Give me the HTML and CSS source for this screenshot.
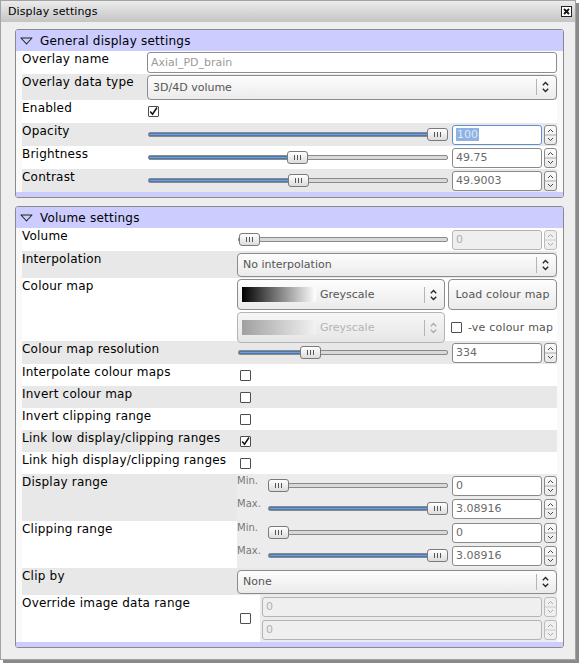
FILE: index.html
```html
<!DOCTYPE html>
<html>
<head>
<meta charset="utf-8">
<title>Display settings</title>
<link rel="stylesheet" href="styles.css">
</head>
<body>
<div class="window">
  <div class="titlebar">
    <span class="title">Display settings</span>
    <span class="close"><svg width="11" height="11" viewBox="0 0 11 11"><rect x="0.5" y="0.5" width="10" height="10" fill="#fff" stroke="#222"/><path d="M3 3 L8 8 M8 3 L3 8" stroke="#111" stroke-width="1.8"/></svg></span>
  </div>
  <div class="content">
    <section class="panel general">
      <div class="phead"><svg class="tri" width="13" height="8" viewBox="0 0 13 8"><path d="M1 1 L12 1 L6.5 7 Z" fill="none" stroke="#222" stroke-width="1.1" stroke-linejoin="round"/></svg><span>General display settings</span></div>
      <div class="rows">
        <div class="row h23"><div class="lbl">Overlay name</div><div class="ctl pt1"><div class="input">Axial_PD_brain</div></div></div>
        <div class="row h26 alt"><div class="lbl">Overlay data type</div><div class="ctl mid"><div class="combo"><span class="ctext">3D/4D volume</span><span class="csep"></span><svg class="carrow" width="7" height="12" viewBox="0 0 7 12"><path d="M0.8 4.2 L3.5 1.5 L6.2 4.2 M0.8 7.8 L3.5 10.5 L6.2 7.8" fill="none" stroke="#222" stroke-width="1.3"/></svg></div></div></div>
        <div class="row h23"><div class="lbl">Enabled</div><div class="ctl mid"><span class="check on"><svg width="11" height="11" viewBox="0 0 11 11"><path d="M2.2 5.5 L4.5 8.2 L9 1.5" fill="none" stroke="#111" stroke-width="1.5"/></svg></span></div></div>
        <div class="row h23 alt"><div class="lbl">Opacity</div><div class="ctl mid">
          <div class="ss">
            <div class="slider"><div class="groove"><div class="fill" style="width:290px"></div></div><div class="handle" style="left:280px"><i></i><i></i><i></i></div></div>
            <div class="spin focus"><span class="sel">100</span></div>
            <div class="arrows"><svg width="13" height="20" viewBox="0 0 13 20"><path d="M4 7 L6.5 4.5 L9 7 M4 13 L6.5 15.5 L9 13" fill="none" stroke="#444" stroke-width="1"/><path d="M1 10 H12" stroke="#aaa"/></svg></div>
          </div></div></div>
        <div class="row h23"><div class="lbl">Brightness</div><div class="ctl mid">
          <div class="ss">
            <div class="slider"><div class="groove"><div class="fill" style="width:148px"></div></div><div class="handle" style="left:140px"><i></i><i></i><i></i></div></div>
            <div class="spin">49.75</div>
            <div class="arrows"><svg width="13" height="20" viewBox="0 0 13 20"><path d="M4 7 L6.5 4.5 L9 7 M4 13 L6.5 15.5 L9 13" fill="none" stroke="#444" stroke-width="1"/><path d="M1 10 H12" stroke="#aaa"/></svg></div>
          </div></div></div>
        <div class="row h23 alt"><div class="lbl">Contrast</div><div class="ctl mid">
          <div class="ss">
            <div class="slider"><div class="groove"><div class="fill" style="width:149px"></div></div><div class="handle" style="left:141px"><i></i><i></i><i></i></div></div>
            <div class="spin">49.9003</div>
            <div class="arrows"><svg width="13" height="20" viewBox="0 0 13 20"><path d="M4 7 L6.5 4.5 L9 7 M4 13 L6.5 15.5 L9 13" fill="none" stroke="#444" stroke-width="1"/><path d="M1 10 H12" stroke="#aaa"/></svg></div>
          </div></div></div>
      </div>
      <div class="pfoot"></div>
    </section>

    <section class="panel volume">
      <div class="phead"><svg class="tri" width="13" height="8" viewBox="0 0 13 8"><path d="M1 1 L12 1 L6.5 7 Z" fill="none" stroke="#222" stroke-width="1.1" stroke-linejoin="round"/></svg><span>Volume settings</span></div>
      <div class="rows">
        <div class="row h23"><div class="lbl">Volume</div><div class="ctl mid">
          <div class="ss">
            <div class="slider"><div class="groove"><div class="fill" style="width:0px"></div></div><div class="handle" style="left:2px"><i></i><i></i><i></i></div></div>
            <div class="spin dis">0</div>
            <div class="arrows dis"><svg width="13" height="20" viewBox="0 0 13 20"><path d="M4 7 L6.5 4.5 L9 7 M4 13 L6.5 15.5 L9 13" fill="none" stroke="#aaa" stroke-width="1"/><path d="M1 10 H12" stroke="#ccc"/></svg></div>
          </div></div></div>
        <div class="row h27 alt"><div class="lbl">Interpolation</div><div class="ctl mid"><div class="combo"><span class="ctext">No interpolation</span><span class="csep"></span><svg class="carrow" width="7" height="12" viewBox="0 0 7 12"><path d="M0.8 4.2 L3.5 1.5 L6.2 4.2 M0.8 7.8 L3.5 10.5 L6.2 7.8" fill="none" stroke="#222" stroke-width="1.3"/></svg></div></div></div>
        <div class="row h63"><div class="lbl">Colour map</div><div class="ctl cmap">
          <div class="combo tall"><span class="swatch"></span><span class="ctext cm">Greyscale</span><span class="csep"></span><svg class="carrow" width="7" height="12" viewBox="0 0 7 12"><path d="M0.8 4.2 L3.5 1.5 L6.2 4.2 M0.8 7.8 L3.5 10.5 L6.2 7.8" fill="none" stroke="#222" stroke-width="1.3"/></svg></div>
          <div class="button">Load colour map</div>
          <div class="combo tall dis"><span class="swatch"></span><span class="ctext cm">Greyscale</span><span class="csep"></span><svg class="carrow" width="7" height="12" viewBox="0 0 7 12"><path d="M0.8 4.2 L3.5 1.5 L6.2 4.2 M0.8 7.8 L3.5 10.5 L6.2 7.8" fill="none" stroke="#aaa" stroke-width="1.3"/></svg></div>
          <div class="negcm"><span class="check"></span><span>-ve colour map</span></div>
        </div></div>
        <div class="row h23 alt"><div class="lbl">Colour map resolution</div><div class="ctl mid">
          <div class="ss">
            <div class="slider"><div class="groove"><div class="fill" style="width:70px"></div></div><div class="handle" style="left:63px"><i></i><i></i><i></i></div></div>
            <div class="spin">334</div>
            <div class="arrows"><svg width="13" height="20" viewBox="0 0 13 20"><path d="M4 7 L6.5 4.5 L9 7 M4 13 L6.5 15.5 L9 13" fill="none" stroke="#444" stroke-width="1"/><path d="M1 10 H12" stroke="#aaa"/></svg></div>
          </div></div></div>
        <div class="row h22"><div class="lbl">Interpolate colour maps</div><div class="ctl mid"><span class="check"></span></div></div>
        <div class="row h22 alt"><div class="lbl">Invert colour map</div><div class="ctl mid"><span class="check"></span></div></div>
        <div class="row h22"><div class="lbl">Invert clipping range</div><div class="ctl mid"><span class="check"></span></div></div>
        <div class="row h22 alt"><div class="lbl">Link low display/clipping ranges</div><div class="ctl mid"><span class="check on"><svg width="11" height="11" viewBox="0 0 11 11"><path d="M2.2 5.5 L4.5 8.2 L9 1.5" fill="none" stroke="#111" stroke-width="1.5"/></svg></span></div></div>
        <div class="row h22"><div class="lbl">Link high display/clipping ranges</div><div class="ctl mid"><span class="check"></span></div></div>
        <div class="row h47 alt"><div class="lbl">Display range</div><div class="ctl range">
          <div class="rrow"><span class="mm">Min.</span>
            <div class="slider"><div class="groove"><div class="fill" style="width:0px"></div></div><div class="handle" style="left:0px"><i></i><i></i><i></i></div></div>
            <div class="spin">0</div>
            <div class="arrows"><svg width="13" height="20" viewBox="0 0 13 20"><path d="M4 7 L6.5 4.5 L9 7 M4 13 L6.5 15.5 L9 13" fill="none" stroke="#444" stroke-width="1"/><path d="M1 10 H12" stroke="#aaa"/></svg></div></div>
          <div class="rrow"><span class="mm">Max.</span>
            <div class="slider"><div class="groove"><div class="fill" style="width:170px"></div></div><div class="handle" style="left:159px"><i></i><i></i><i></i></div></div>
            <div class="spin">3.08916</div>
            <div class="arrows"><svg width="13" height="20" viewBox="0 0 13 20"><path d="M4 7 L6.5 4.5 L9 7 M4 13 L6.5 15.5 L9 13" fill="none" stroke="#444" stroke-width="1"/><path d="M1 10 H12" stroke="#aaa"/></svg></div></div>
        </div></div>
        <div class="row h47"><div class="lbl">Clipping range</div><div class="ctl range">
          <div class="rrow"><span class="mm">Min.</span>
            <div class="slider"><div class="groove"><div class="fill" style="width:0px"></div></div><div class="handle" style="left:0px"><i></i><i></i><i></i></div></div>
            <div class="spin">0</div>
            <div class="arrows"><svg width="13" height="20" viewBox="0 0 13 20"><path d="M4 7 L6.5 4.5 L9 7 M4 13 L6.5 15.5 L9 13" fill="none" stroke="#444" stroke-width="1"/><path d="M1 10 H12" stroke="#aaa"/></svg></div></div>
          <div class="rrow"><span class="mm">Max.</span>
            <div class="slider"><div class="groove"><div class="fill" style="width:170px"></div></div><div class="handle" style="left:159px"><i></i><i></i><i></i></div></div>
            <div class="spin">3.08916</div>
            <div class="arrows"><svg width="13" height="20" viewBox="0 0 13 20"><path d="M4 7 L6.5 4.5 L9 7 M4 13 L6.5 15.5 L9 13" fill="none" stroke="#444" stroke-width="1"/><path d="M1 10 H12" stroke="#aaa"/></svg></div></div>
        </div></div>
        <div class="row h27 alt"><div class="lbl">Clip by</div><div class="ctl mid"><div class="combo"><span class="ctext">None</span><span class="csep"></span><svg class="carrow" width="7" height="12" viewBox="0 0 7 12"><path d="M0.8 4.2 L3.5 1.5 L6.2 4.2 M0.8 7.8 L3.5 10.5 L6.2 7.8" fill="none" stroke="#222" stroke-width="1.3"/></svg></div></div></div>
        <div class="row h47"><div class="lbl">Override image data range</div><div class="ctl override">
          <div class="ovcheck"><span class="check"></span></div>
          <div class="ovspins">
            <div class="orow"><div class="spin dis">0</div><div class="arrows dis"><svg width="13" height="20" viewBox="0 0 13 20"><path d="M4 7 L6.5 4.5 L9 7 M4 13 L6.5 15.5 L9 13" fill="none" stroke="#aaa" stroke-width="1"/><path d="M1 10 H12" stroke="#ccc"/></svg></div></div>
            <div class="orow"><div class="spin dis">0</div><div class="arrows dis"><svg width="13" height="20" viewBox="0 0 13 20"><path d="M4 7 L6.5 4.5 L9 7 M4 13 L6.5 15.5 L9 13" fill="none" stroke="#aaa" stroke-width="1"/><path d="M1 10 H12" stroke="#ccc"/></svg></div></div>
          </div>
        </div></div>
      </div>
      <div class="pfoot"></div>
    </section>
  </div>
</div>
</body>
</html>
```

FILE: styles.css
```css
* { box-sizing: border-box; }
html, body { margin: 0; padding: 0; }
body {
  width: 579px; height: 664px; overflow: hidden;
  background: #ffffff;
  font-family: "DejaVu Sans", sans-serif;
  font-size: 12px; color: #000;
}
.window {
  width: 576px; height: 660px;
  border: 1px solid #a3a3a3;
  background: #eeeeee;
  display: flex; flex-direction: column;
  box-shadow: 3px 3px 0 #8a8a8a;
}
.titlebar {
  height: 21px; flex: none;
  background: linear-gradient(#ececec, #c4c4c4);
  display: flex; align-items: center; justify-content: space-between;
  padding: 0 3px 0 7px;
}
.title { font-size: 11px; letter-spacing: 0.1px; }
.close { display: flex; }
.content {
  flex: 1;
  padding: 7px 0 0 14px;
  display: flex; flex-direction: column; gap: 8px;
}
.panel {
  width: 549px;
  border: 1px solid #8a8a8a; border-radius: 3px;
  background: #f9f9f9;
  overflow: hidden;
}
.phead {
  height: 21px; background: #ccccff;
  display: flex; align-items: center; gap: 7px;
  padding-left: 4px; letter-spacing: 0.22px;
}
.tri { flex: none; }
.pfoot { height: 5px; background: #ccccff; }
.rows { margin: 0 6px; }
.row { display: grid; }
.general .row { grid-template-columns: 125px 1fr; }
.volume .row { grid-template-columns: 215px 1fr; }
.row.alt { background: #e8e8e8; }
.row:not(.alt) { background: #ffffff; }
.h22 { height: 22px; } .h23 { height: 23px; } .h26 { height: 26px; } .h27 { height: 27px; }
.h47 { height: 47px; } .h63 { height: 63px; }
.lbl { letter-spacing: 0.22px; line-height: 14px; padding-top: 1px; white-space: nowrap; }
.ctl { min-width: 0; }
.ctl.pt1 { padding-top: 1px; }
.ctl.mid { display: flex; align-items: center; }

.input {
  height: 21px; border: 1px solid #8c8c8c; border-radius: 3px;
  background: #fff; font-size: 11px; color: #9a9a9a;
  padding-left: 3px; line-height: 19px;
}

.combo {
  width: 100%; height: 25px;
  border: 1px solid #8c8c8c; border-radius: 4px;
  background: linear-gradient(#fdfdfd, #ebebeb);
  display: flex; align-items: center;
  font-size: 11px; color: #555;
}
.row.h27 .combo { height: 24px; }
.ctext { flex: 1; padding-left: 5px; white-space: nowrap; }
.csep { width: 1px; height: 16px; background: #b5b5b5; margin-right: 5px; }
.carrow { margin-right: 7px; flex: none; }

.check {
  width: 11px; height: 11px; border: 1px solid #4e4e4e; border-radius: 1px;
  background: #fff; display: inline-flex; flex: none;
}
.check svg { margin: -1px; }
.general .check { margin-left: 1px; }
.volume .check { margin-left: 3px; }

.ss { width: 100%; display: flex; align-items: center; }
.slider { flex: 1; position: relative; height: 13px; }
.groove {
  position: absolute; left: 1px; right: 0; top: 4px; height: 5px;
  border: 1px solid #8a8a8a; border-radius: 2px; background: #d9d9d9;
  overflow: hidden;
}
.fill { height: 100%; background: #759fd4; box-shadow: inset 0 0 0 1px #4a78b0; }
.handle {
  position: absolute; top: 0; width: 21px; height: 13px;
  border: 1px solid #7a7a7a; border-radius: 3px;
  background: linear-gradient(#ffffff, #dcdcdc);
  display: flex; align-items: center; justify-content: center; gap: 2px;
}
.handle i { display: block; width: 1px; height: 5px; background: #555; }
.spin {
  flex: none; width: 90px; height: 20px; margin-left: 4px;
  border: 1px solid #8a8a8a; border-radius: 3px; background: #fff;
  font-size: 11px; color: #6a6a6a; line-height: 18px; padding-left: 3px;
}
.spin.focus { border-color: #5b8fd6; }
.sel { background: #8eb2e2; color: #dce8f8; padding: 0 1px; }
.spin.dis { background: #efefef; border-color: #b4b4b4; color: #b0b0b0; }
.arrows {
  flex: none; width: 13px; height: 20px; margin-left: 2px;
  border: 1px solid #8a8a8a; border-radius: 3px; background: linear-gradient(#fbfbfb, #e9e9e9);
  display: flex;
}
.arrows svg { margin: -1px; }
.arrows.dis { border-color: #bcbcbc; background: #efefef; }

.ctl.cmap {
  display: grid; grid-template-columns: 208px 1fr; column-gap: 3px; row-gap: 2px;
  padding-top: 1px; align-content: start;
}
.combo.tall { height: 31px; }
.swatch {
  width: 74px; height: 15px; margin-left: 4px; flex: none;
  background: linear-gradient(to right, #000, #fff);
}
.ctext.cm { padding-left: 4px; }
.combo.dis { border-color: #b4b4b4; background: linear-gradient(#f6f6f6, #e6e6e6); color: #b5b5b5; }
.combo.dis .swatch { background: linear-gradient(to right, #a0a0a0, #f2f2f2); }
.button {
  height: 31px; border: 1px solid #8c8c8c; border-radius: 4px;
  background: linear-gradient(#fdfdfd, #ebebeb);
  font-size: 11px; color: #555;
  display: flex; align-items: center; justify-content: center; letter-spacing: 0.15px;
}
.negcm { display: flex; align-items: center; gap: 6px; font-size: 11px; color: #555; letter-spacing: 0.2px; }
.negcm .check { margin-left: 3px; }

.ctl.range { background: #ececec; }
.rrow { height: 23px; display: flex; align-items: center; }
.mm { width: 31px; flex: none; font-size: 10px; color: #777; align-self: flex-start; padding-top: 1px; }
.range .groove { left: 0; }

.ctl.override { display: flex; }
.ovcheck { width: 23px; flex: none; display: flex; align-items: center; background: #fff; }
.ovspins { flex: 1; background: #ececec; padding: 2px 0 0 2px; display: flex; flex-direction: column; gap: 3px; }
.orow { display: flex; }
.orow .spin { flex: 1; width: auto; margin-left: 0; }
```
